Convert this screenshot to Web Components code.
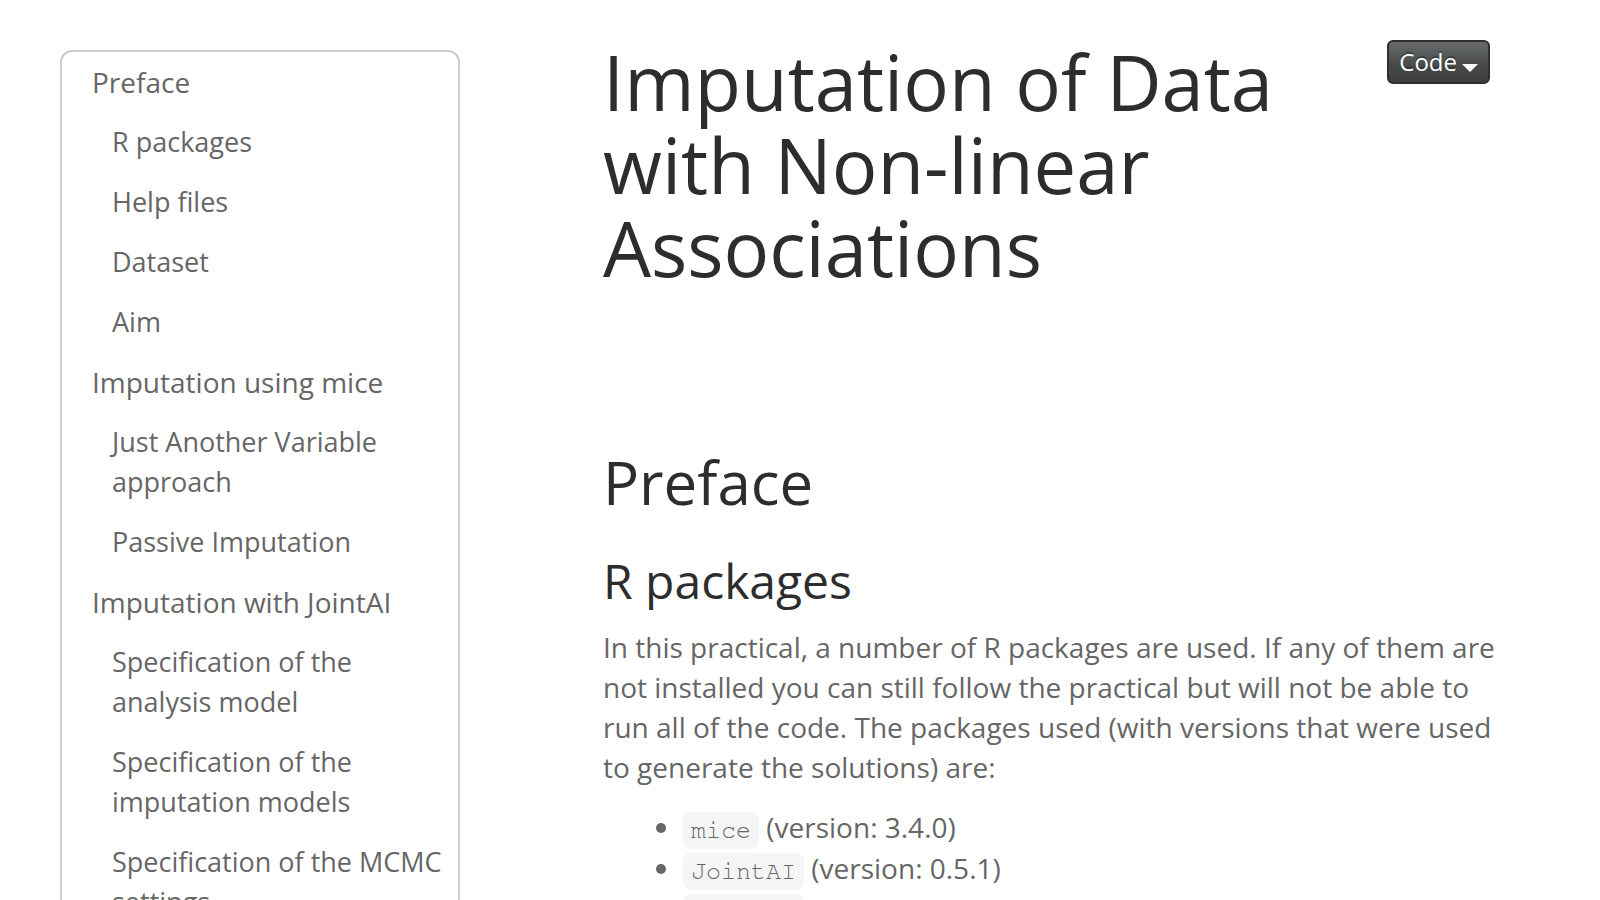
<!DOCTYPE html>
<html lang="en">
<head>
<meta charset="utf-8">
<title>Imputation of Data with Non-linear Associations</title>
<style>
html { scrollbar-width: none; }
body { margin: 0; background: #fff; color: #666; font: 28px/40px "Open Sans", sans-serif; }
</style>
</head>
<body>
<practical-page></practical-page>
<script>
class TocItem extends HTMLElement {
  connectedCallback() {
    const root = this.attachShadow({ mode: 'open' });
    root.innerHTML = `
      <style>
        :host { display: block; }
        a { display: block; padding: 10px 12px 10px 30px; color: #666; text-decoration: none; }
        :host([level="2"]) a { padding-left: 50px; font-size: 27px; }
      </style>
      <a href="#"><slot></slot></a>`;
  }
}
customElements.define('toc-item', TocItem);

class TocPanel extends HTMLElement {
  connectedCallback() {
    const root = this.attachShadow({ mode: 'open' });
    root.innerHTML = `
      <style>
        :host { display: block; box-sizing: border-box; border: 2px solid #ccc; border-radius: 12px; }
      </style>
      <nav aria-label="Contents"><slot></slot></nav>`;
  }
}
customElements.define('toc-panel', TocPanel);

class CodeMenu extends HTMLElement {
  connectedCallback() {
    const root = this.attachShadow({ mode: 'open' });
    root.innerHTML = `
      <style>
        :host { display: block; }
        button { display: flex; align-items: center; gap: 5px; box-sizing: border-box; height: 44px; padding: 0 10px; border: 2px solid #2e2f2f; border-radius: 6px; color: #fff; background: linear-gradient(#686c6d, #474949 60%, #3d3f3e); font: 24px/36px "Open Sans", sans-serif; text-shadow: 0 -2px 0 rgba(0, 0, 0, .3); }
        svg { width: 16px; height: 8px; margin-top: 12px; }
      </style>
      <button type="button"><span><slot></slot></span><svg viewBox="0 0 16 8" aria-hidden="true"><path d="M0 0h16L8 8z" fill="#fff"/></svg></button>`;
  }
}
customElements.define('code-menu', CodeMenu);

class PackageItem extends HTMLElement {
  connectedCallback() {
    const root = this.attachShadow({ mode: 'open' });
    root.innerHTML = `
      <style>
        :host { display: list-item; list-style: disc; line-height: 41px; }
        code { padding: 6px 8px; border-radius: 8px; color: #666; background: #f5f5f5; font: 25px "Courier 10 Pitch", FreeMono, "Nimbus Mono PS", "Liberation Mono", monospace; }
      </style>
      <code>${this.getAttribute('name')}</code> (version: ${this.getAttribute('version')})`;
  }
}
customElements.define('package-item', PackageItem);

class PracticalPage extends HTMLElement {
  connectedCallback() {
    const root = this.attachShadow({ mode: 'open' });
    root.innerHTML = `
      <style>
        :host { display: grid; grid-template-columns: 400px minmax(0, 1fr); align-items: start; gap: 143px; padding: 40px 100px 0 60px; }
        toc-panel { margin-top: 10px; }
        header { display: flex; align-items: flex-start; justify-content: space-between; gap: 24px; padding-right: 10px; }
        h1, h2, h3 { margin: 0; color: #2d2d2d; font-weight: 400; }
        h1 { max-width: 720px; font-size: 76px; line-height: 83px; }
        h2 { margin-top: 160px; font-size: 60px; line-height: 66px; }
        h3 { margin-top: 40px; font-size: 48px; line-height: 52px; }
        p { margin: 20px 0; }
        ul { margin: 0; padding: 0 0 0 80px; }
      </style>
      <toc-panel>
        <toc-item>Preface</toc-item>
        <toc-item level="2">R packages</toc-item>
        <toc-item level="2">Help files</toc-item>
        <toc-item level="2">Dataset</toc-item>
        <toc-item level="2">Aim</toc-item>
        <toc-item>Imputation using mice</toc-item>
        <toc-item level="2">Just Another Variable approach</toc-item>
        <toc-item level="2">Passive Imputation</toc-item>
        <toc-item>Imputation with JointAI</toc-item>
        <toc-item level="2">Specification of the analysis model</toc-item>
        <toc-item level="2">Specification of the imputation models</toc-item>
        <toc-item level="2">Specification of the MCMC settings</toc-item>
      </toc-panel>
      <main>
        <header><h1>Imputation of Data with Non-linear Associations</h1><code-menu>Code</code-menu></header>
        <h2>Preface</h2>
        <h3>R packages</h3>
        <p>In this practical, a number of R packages are used. If any of them are not installed you can still follow the practical but will not be able to run all of the code. The packages used (with versions that were used to generate the solutions) are:</p>
        <ul role="list">
          <package-item role="listitem" name="mice" version="3.4.0"></package-item>
          <package-item role="listitem" name="JointAI" version="0.5.1"></package-item>
          <package-item role="listitem" name="ggplot2" version="3.1.1"></package-item>
        </ul>
      </main>`;
  }
}
customElements.define('practical-page', PracticalPage);
</script>
</body>
</html>
